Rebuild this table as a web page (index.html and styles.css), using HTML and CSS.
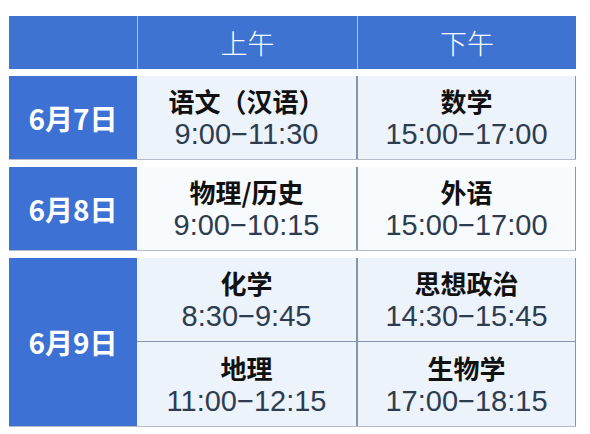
FILE: index.html
```html
<!DOCTYPE html>
<html lang="zh">
<head>
<meta charset="utf-8">
<link rel="stylesheet" href="styles.css">
</head>
<body>
<div class="table">
  <div class="row head">
    <div class="cell corner"></div>
    <div class="cell hd">上午</div>
    <div class="cell hd hd-last">下午</div>
  </div>
  <div class="row r1">
    <div class="cell date">6月7日</div>
    <div class="cell item"><span class="subj">语文（汉语）</span><span class="time">9:00−11:30</span></div>
    <div class="cell item last"><span class="subj">数学</span><span class="time">15:00−17:00</span></div>
  </div>
  <div class="row r2">
    <div class="cell date">6月8日</div>
    <div class="cell item"><span class="subj">物理/历史</span><span class="time">9:00−10:15</span></div>
    <div class="cell item last"><span class="subj">外语</span><span class="time">15:00−17:00</span></div>
  </div>
  <div class="row r3">
    <div class="cell date tall">6月9日</div>
    <div class="cell item split"><span class="subj">化学</span><span class="time">8:30−9:45</span></div>
    <div class="cell item last split"><span class="subj">思想政治</span><span class="time">14:30−15:45</span></div>
    <div class="cell item"><span class="subj">地理</span><span class="time">11:00−12:15</span></div>
    <div class="cell item last"><span class="subj">生物学</span><span class="time">17:00−18:15</span></div>
  </div>
</div>
</body>
</html>
```
FILE: styles.css
```css
html, body { margin: 0; padding: 0; background: #fff; }
body { padding: 16px 0 0 9px; font-family: "Noto Sans CJK SC", "Noto Sans", sans-serif; }
.table { width: 567px; display: flex; flex-direction: column; gap: 7px; }
.row { display: grid; grid-template-columns: 128px 220px 219px; }
.head { height: 53px; background: #3f73d2; }
.hd { color: #fff; font-size: 27px; font-weight: 300; display: flex; align-items: center; justify-content: center; border-left: 1px solid #a7c2ee; }
.r1, .r2 { height: 84px; border-bottom: 1px solid #b3bcc8; box-sizing: border-box; }
.r3 { grid-template-rows: 84px 84px; border-bottom: 1px solid #b3bcc8; }
.date { background: #3d71d3; color: #fff; font-weight: 700; font-size: 28px; display: flex; align-items: center; justify-content: center; }
.tall { grid-row: span 2; }
.item { display: flex; flex-direction: column; align-items: center; justify-content: center; border-right: 1px solid #8796aa; background: #ecf3fb; gap: 2px; padding-top: 1px; }
.r2 .item { background: #f8fbfe; }
.item.last { border-left: 1px solid #8796aa; }
.split { border-bottom: 1px solid #8796aa; }
.subj { font-size: 26px; font-weight: 700; color: #111; line-height: 30px; }
.time { font-family: "Liberation Sans", Arial, sans-serif; font-size: 29px; color: #2e3c50; line-height: 32px; }
```
